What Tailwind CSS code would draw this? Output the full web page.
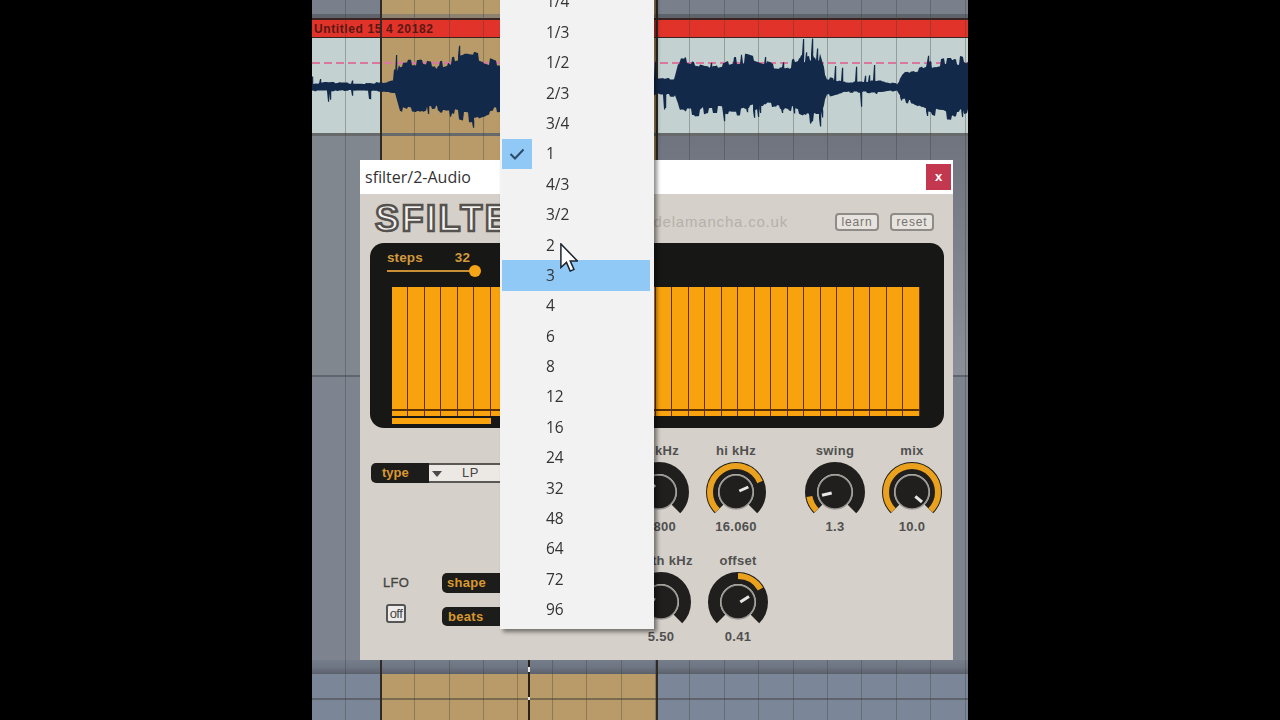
<!DOCTYPE html>
<html lang="en">
<head>
  <meta charset="UTF-8">
  <title>sfilter/2-Audio</title>
  <script src="https://cdn.jsdelivr.net/npm/@tailwindcss/browser@4"></script>
</head>
<body class="bg-black">
  <div class="relative w-[656px] h-[720px] mx-auto overflow-hidden blur-[0.6px] font-['Liberation_Sans',sans-serif]">

    <!-- Arrange view tracks -->
    <div class="flex h-[14px]">
      <div class="w-[68px] bg-[#79808c]"></div>
      <div class="w-[277px] bg-[#b79b6b]"></div>
      <div class="flex-1 bg-[#79808c]"></div>
    </div>
    <div class="flex h-[4px]">
      <div class="w-[68px] bg-[#5f646c]"></div>
      <div class="w-[277px] bg-[#8d8270]"></div>
      <div class="flex-1 bg-[#5f646c]"></div>
    </div>
    <div class="h-[20px] flex items-center pl-[2px] bg-[#e2332a] border-t-2 border-b border-[#3a2320] text-[12px] font-bold tracking-[0.6px] text-[#5b1712]">Untitled 15 4 20182</div>
    <div class="flex h-[95px]">
      <div class="w-[68px] bg-[#c3d2d1]"></div>
      <div class="w-[277px] bg-[#b99b69]"></div>
      <div class="flex-1 bg-[#c3d2d1]"></div>
    </div>
    <div class="h-[3px] bg-[#68696a]"></div>
    <div class="flex h-[239px]">
      <div class="w-[68px] bg-[#81878f]"></div>
      <div class="w-[277px] bg-[#b99b69]"></div>
      <div class="flex-1 bg-gradient-to-b from-[#6f747e] to-[#8a8f99]"></div>
    </div>
    <div class="flex h-[285px]">
      <div class="w-[68px] bg-[#7d8490] border-t-2 border-[#60656d]"></div>
      <div class="w-[277px] bg-[#b99b69]"></div>
      <div class="flex-1 bg-[#7d8490] border-t-2 border-[#60656d]"></div>
    </div>
    <div class="h-[14px] bg-gradient-to-b from-[#767d8a] via-[#6f7683] to-[#5a606b]"></div>
    <div class="flex h-[24px]">
      <div class="w-[68px] bg-[#7b8798]"></div>
      <div class="w-[277px] bg-[#b99b69]"></div>
      <div class="flex-1 bg-[#7b8798]"></div>
    </div>
    <div class="flex h-[2px]">
      <div class="w-[68px] bg-[#5f646c]"></div>
      <div class="w-[277px] bg-[#7a6c50]"></div>
      <div class="flex-1 bg-[#5f646c]"></div>
    </div>
    <div class="flex h-[20px]">
      <div class="w-[68px] bg-[#7b8798]"></div>
      <div class="w-[277px] bg-[#b99b69]"></div>
      <div class="flex-1 bg-[#7b8798]"></div>
    </div>

    <!-- grid lines and locators over the tracks -->
    <div class="absolute inset-0 bg-[repeating-linear-gradient(90deg,transparent_0,transparent_33.4px,rgba(60,60,50,0.35)_33.4px,rgba(60,60,50,0.35)_34.4px)]"></div>
    <div class="absolute left-[68px] top-0 w-[2px] h-full bg-[#2f2a24]"></div>
    <div class="absolute left-[344px] top-0 w-[2px] h-full bg-[#2f2a24]"></div>
    <div class="absolute left-[216px] top-[660px] w-[2px] h-[60px] bg-[#2a2018]"></div>
    <div class="absolute left-[216px] top-[667px] w-[2px] h-[5px] bg-[#e8e8e8]"></div>
    <div class="absolute left-[216px] top-[697px] w-[2px] h-[3px] bg-[#e8e8e8]"></div>

    <!-- waveform -->
    <svg class="absolute left-0 top-[38px]" width="656" height="95" viewBox="0 0 656 95">
      <line x1="0" y1="25" x2="656" y2="25" stroke="#d9789c" stroke-width="2" stroke-dasharray="8 4"/>
      <path id="wave" fill="#12294a"/>
    </svg>

    <!-- Plugin window -->
    <div class="absolute left-[48px] top-[160px] w-[593px] h-[500px] flex flex-col bg-[#d5d0c9]">
      <div class="h-[34px] bg-white flex items-center justify-between pl-[5px] pr-[2px] text-[16px] text-[#333] font-['Open_Sans',sans-serif]">
        <span>sfilter/2-Audio</span>
        <div class="w-[25px] h-[26px] bg-[#c4384f] flex items-center justify-center text-white text-[13px] font-bold font-['Liberation_Sans',sans-serif]">x</div>
      </div>

      <div class="h-[49px] flex items-center pl-[15px] pr-[19px]">
        <span class="text-[36px] leading-none font-bold tracking-[2.5px] text-[#f5f3f0] [-webkit-text-stroke:2.5px_#55524f]">SFILTER</span>
        <span class="ml-auto mr-[47px] mt-[7px] text-[15px] tracking-[0.8px] text-[#b5b1aa]">www.delamancha.co.uk</span>
        <div class="w-[44px] h-[18px] mt-[7px] mr-[11px] flex items-center justify-center border-2 border-[#8f8b86] rounded-[4px] bg-[#e7e4df] text-[12px] tracking-[0.9px] text-[#77736e]">learn</div>
        <div class="w-[44px] h-[18px] mt-[7px] flex items-center justify-center border-2 border-[#8f8b86] rounded-[4px] bg-[#e7e4df] text-[12px] tracking-[0.9px] text-[#77736e]">reset</div>
      </div>

      <!-- Step sequencer -->
      <div class="ml-[10px] mr-[9px] h-[185px] bg-[#171715] rounded-[14px] pl-[21.5px] pt-[6px]">
        <div class="flex w-[83px] -ml-[4.5px] justify-between text-[13.5px] font-bold text-[#d29a3c] leading-[18px] tracking-[0.1px]">
          <span>steps</span><span>32</span>
        </div>
        <div class="relative h-[2px] w-[88px] -ml-[4.5px] mt-[3px] bg-[#c98f35]">
          <div class="absolute -right-[6px] -top-[5px] w-[12px] h-[12px] rounded-full bg-[#f5a416]"></div>
        </div>
        <div class="w-[528px] mt-[15px]">
          <div class="flex flex-col gap-[2px] bg-[#5c3206]">
            <div class="h-[122px] bg-[repeating-linear-gradient(90deg,#f8a30e_0,#f8a30e_15.5px,#5c3206_15.5px,#5c3206_16.5px)]"></div>
            <div class="h-[5px] bg-[repeating-linear-gradient(90deg,#f8a30e_0,#f8a30e_15.5px,#5c3206_15.5px,#5c3206_16.5px)]"></div>
          </div>
          <div class="h-[6px] w-[99px] mt-[2px] bg-[#f8a30e]"></div>
        </div>
      </div>

      <!-- Controls -->
      <div class="flex-1 flex">
        <div class="w-[260.5px] pl-[11px] text-[13px] font-bold text-[#d9982f]">
          <div class="mt-[35px] h-[20px] flex">
            <div class="w-[58px] bg-[#1c1c1a] rounded-l-[5px] pl-[11px] flex items-center">type</div>
            <div class="w-[90px] relative bg-[#ece9e5] border-y-2 border-[#5a5855] text-[#444] flex items-center pl-[33px]">
              <svg class="absolute left-[3px] top-[6px]" width="10" height="6" viewBox="0 0 10 6"><path d="M0 0H10L5 6Z" fill="#4a4a4a"/></svg>
              <span class="font-normal tracking-[0.5px]">LP</span>
            </div>
          </div>
          <div class="mt-[90px] flex gap-[21px]">
            <div class="w-[50px] flex flex-col gap-[11px] items-center">
              <div class="h-[19.5px] flex items-center text-[#444] font-normal tracking-[0.3px] [-webkit-text-stroke:0.3px_#444]">LFO</div>
              <div class="w-[20px] h-[19.5px] border-2 border-[#555] rounded-[3px] bg-[#eeecea] flex items-center justify-center text-[#444] text-[13px] font-normal tracking-[-0.5px]">off</div>
            </div>
            <div class="flex flex-col gap-[14px]">
              <div class="w-[90px] h-[19.5px] bg-[#1c1c1a] rounded-l-[5px] pl-[5px] flex items-center tracking-[0.3px]">shape</div>
              <div class="w-[90px] h-[19.5px] bg-[#1c1c1a] rounded-l-[5px] pl-[6px] flex items-center tracking-[0.3px]">beats</div>
            </div>
          </div>
        </div>

        <div class="pt-[15px] flex flex-col gap-[18px] text-[13px] font-bold text-[#505050] tracking-[0.3px]">
          <div class="flex">
            <div class="w-[77px] flex flex-col items-center">
              <span class="h-[16px] leading-[16px]">lo kHz</span>
              <svg class="mt-px" width="64" height="64" viewBox="0 0 64 64" fill="none">
                <path d="M15.03 48.97A24 24 0 1 1 48.97 48.97" stroke="#211f1e" stroke-width="12"/>
                <circle cx="32" cy="32" r="17" fill="#211f1e" stroke="#9a9792" stroke-width="1.5"/>
                <line x1="28" y1="27" x2="24" y2="23" stroke="#e6e6e6" stroke-width="3"/>
              </svg>
              <span class="h-[16px] leading-[16px] -mt-[5px]">0.800</span>
            </div>
            <div class="w-[77px] flex flex-col items-center">
              <span class="h-[16px] leading-[16px]">hi kHz</span>
              <svg class="mt-px" width="64" height="64" viewBox="0 0 64 64" fill="none">
                <path d="M15.03 48.97A24 24 0 1 1 48.97 48.97" stroke="#211f1e" stroke-width="12"/>
                <path d="M13.6 50.4A26 26 0 1 1 56 22" stroke="#e9a11e" stroke-width="6"/>
                <circle cx="32" cy="32" r="17" fill="#211f1e" stroke="#9a9792" stroke-width="1.5"/>
                <line x1="35.3" y1="31" x2="44.3" y2="27" stroke="#e6e6e6" stroke-width="3"/>
              </svg>
              <span class="h-[16px] leading-[16px] -mt-[5px]">16.060</span>
            </div>
            <div class="w-[22px]"></div>
            <div class="w-[77px] flex flex-col items-center">
              <span class="h-[16px] leading-[16px]">swing</span>
              <svg class="mt-px" width="64" height="64" viewBox="0 0 64 64" fill="none">
                <path d="M15.03 48.97A24 24 0 1 1 48.97 48.97" stroke="#211f1e" stroke-width="12"/>
                <path d="M13.6 50.4A26 26 0 0 1 6.4 36.5" stroke="#e9a11e" stroke-width="6"/>
                <circle cx="32" cy="32" r="17" fill="#211f1e" stroke="#9a9792" stroke-width="1.5"/>
                <line x1="19" y1="35.3" x2="28.7" y2="33" stroke="#e6e6e6" stroke-width="3"/>
              </svg>
              <span class="h-[16px] leading-[16px] -mt-[5px]">1.3</span>
            </div>
            <div class="w-[77px] flex flex-col items-center">
              <span class="h-[16px] leading-[16px]">mix</span>
              <svg class="mt-px" width="64" height="64" viewBox="0 0 64 64" fill="none">
                <path d="M15.03 48.97A24 24 0 1 1 48.97 48.97" stroke="#211f1e" stroke-width="12"/>
                <path d="M13.6 50.4A26 26 0 1 1 50.4 50.4" stroke="#e9a11e" stroke-width="6"/>
                <circle cx="32" cy="32" r="17" fill="#211f1e" stroke="#9a9792" stroke-width="1.5"/>
                <line x1="35.3" y1="36.3" x2="42" y2="42" stroke="#e6e6e6" stroke-width="3"/>
              </svg>
              <span class="h-[16px] leading-[16px] -mt-[5px]">10.0</span>
            </div>
          </div>
          <div class="flex ml-[2px]">
            <div class="w-[77px] flex flex-col items-center">
              <span class="h-[16px] leading-[16px] whitespace-nowrap">width kHz</span>
              <svg class="mt-px" width="64" height="64" viewBox="0 0 64 64" fill="none">
                <path d="M15.03 48.97A24 24 0 1 1 48.97 48.97" stroke="#211f1e" stroke-width="12"/>
                <circle cx="32" cy="32" r="17" fill="#211f1e" stroke="#9a9792" stroke-width="1.5"/>
                <line x1="26" y1="30" x2="22" y2="28" stroke="#e6e6e6" stroke-width="3"/>
              </svg>
              <span class="h-[16px] leading-[16px] -mt-[5px]">5.50</span>
            </div>
            <div class="w-[77px] flex flex-col items-center">
              <span class="h-[16px] leading-[16px]">offset</span>
              <svg class="mt-px" width="64" height="64" viewBox="0 0 64 64" fill="none">
                <path d="M15.03 48.97A24 24 0 1 1 48.97 48.97" stroke="#211f1e" stroke-width="12"/>
                <path d="M32 6A26 26 0 0 1 54.5 19" stroke="#e9a11e" stroke-width="6"/>
                <circle cx="32" cy="32" r="17" fill="#211f1e" stroke="#9a9792" stroke-width="1.5"/>
                <line x1="34.3" y1="32" x2="43" y2="26.4" stroke="#e6e6e6" stroke-width="3"/>
              </svg>
              <span class="h-[16px] leading-[16px] -mt-[5px]">0.41</span>
            </div>
          </div>
        </div>
      </div>
    </div>

    <!-- Beats menu -->
    <div class="absolute left-[188px] -top-[13.2px] w-[154px] bg-[#f2f2f2] pb-[4px] shadow-[3px_3px_4px_rgba(0,0,0,0.45)] text-[15.5px] text-[#333] font-['Open_Sans',sans-serif]">
      <div class="w-[148px] ml-[2px] h-[30.4px] pl-[44px] flex items-center">1/4</div>
      <div class="w-[148px] ml-[2px] h-[30.4px] pl-[44px] flex items-center">1/3</div>
      <div class="w-[148px] ml-[2px] h-[30.4px] pl-[44px] flex items-center">1/2</div>
      <div class="w-[148px] ml-[2px] h-[30.4px] pl-[44px] flex items-center">2/3</div>
      <div class="w-[148px] ml-[2px] h-[30.4px] pl-[44px] flex items-center">3/4</div>
      <div class="relative w-[148px] ml-[2px] h-[30.4px] pl-[44px] flex items-center">
        <div class="absolute left-0 top-0 w-[30px] h-full bg-[#90c8f6] flex items-center justify-center">
          <svg width="16" height="12" viewBox="0 0 16 12" fill="none"><path d="M1.5 6L6 10.5L14.5 1.5" stroke="#2b4a68" stroke-width="2"/></svg>
        </div>
        1
      </div>
      <div class="w-[148px] ml-[2px] h-[30.4px] pl-[44px] flex items-center">4/3</div>
      <div class="w-[148px] ml-[2px] h-[30.4px] pl-[44px] flex items-center">3/2</div>
      <div class="w-[148px] ml-[2px] h-[30.4px] pl-[44px] flex items-center">2</div>
      <div class="w-[148px] ml-[2px] h-[30.4px] pl-[44px] flex items-center bg-[#90c8f6]">3</div>
      <div class="w-[148px] ml-[2px] h-[30.4px] pl-[44px] flex items-center">4</div>
      <div class="w-[148px] ml-[2px] h-[30.4px] pl-[44px] flex items-center">6</div>
      <div class="w-[148px] ml-[2px] h-[30.4px] pl-[44px] flex items-center">8</div>
      <div class="w-[148px] ml-[2px] h-[30.4px] pl-[44px] flex items-center">12</div>
      <div class="w-[148px] ml-[2px] h-[30.4px] pl-[44px] flex items-center">16</div>
      <div class="w-[148px] ml-[2px] h-[30.4px] pl-[44px] flex items-center">24</div>
      <div class="w-[148px] ml-[2px] h-[30.4px] pl-[44px] flex items-center">32</div>
      <div class="w-[148px] ml-[2px] h-[30.4px] pl-[44px] flex items-center">48</div>
      <div class="w-[148px] ml-[2px] h-[30.4px] pl-[44px] flex items-center">64</div>
      <div class="w-[148px] ml-[2px] h-[30.4px] pl-[44px] flex items-center">72</div>
      <div class="w-[148px] ml-[2px] h-[30.4px] pl-[44px] flex items-center">96</div>
    </div>

    <!-- mouse pointer -->
    <svg class="absolute left-[248px] top-[243px]" width="18" height="29" viewBox="0 0 12 19.3">
      <path d="M.6 .6V16.4L4.3 12.9L6.8 18.7L9.3 17.6L6.8 11.9H11.6Z" fill="#fff" stroke="#1d2530" stroke-width="1"/>
    </svg>
  </div>

  <script>
    // envelope: [x, up, down], x in px from the left of the column
    var env = [[0,5,5],[33,5,5],[68,6,6],[83,8,6],[88,28,24],[108,36,38],[138,36,34],[168,36,36],[188,36,36],
      [338,11,10],[363,11,10],[369,34,30],[388,36,38],[418,34,31],[448,32,24],[468,32,31],[508,36,38],[515,12,12],
      [538,8,8],[568,7,7],[585,4,4],[593,22,20],[613,32,33],[656,32,33]];
    var seed = 11;
    function rnd() { seed = (seed * 16807) % 2147483647; return seed / 2147483647; }
    function at(x, i) {
      for (var k = 1; k < env.length; k++) {
        if (x <= env[k][0]) {
          var t = (x - env[k-1][0]) / (env[k][0] - env[k-1][0]);
          return env[k-1][i] + (env[k][i] - env[k-1][i]) * t;
        }
      }
      return env[env.length-1][i];
    }
    var up = [], down = [], holdU = 1, holdD = 1, left = 0;
    for (var x = 0; x <= 656; x += 1) {
      if (left-- <= 0) {
        holdU = 0.68 + rnd() * 0.32;
        holdD = 0.68 + rnd() * 0.32;
        left = 1 + Math.floor(rnd() * 4);
      }
      var thin = at(x, 1) < 13;
      var lobe = 0.88 + 0.14 * Math.sin(x / 11);
      var u = at(x, 1) * holdU * lobe, d = at(x, 2) * holdD * lobe;
      // narrow transient spikes, two pixels wide
      if (rnd() < 0.05) { var s = thin ? 2 + rnd() * 1.8 : 1.2 + rnd() * 0.3; up.push((x - 1) + ' ' + (49 - u).toFixed(1)); up.push(x + ' ' + (49 - u * s).toFixed(1)); up.push((x + 1.2) + ' ' + (49 - u * s).toFixed(1)); up.push((x + 1.3) + ' ' + (49 - u).toFixed(1)); }
      else up.push(x + ' ' + (49 - u).toFixed(1));
      if (rnd() < 0.05) { var s2 = thin ? 2 + rnd() * 1.6 : 1.15 + rnd() * 0.25; down.unshift((x - 1) + ' ' + (49 + d).toFixed(1)); down.unshift(x + ' ' + (49 + d * s2).toFixed(1)); down.unshift((x + 1.2) + ' ' + (49 + d * s2).toFixed(1)); down.unshift((x + 1.3) + ' ' + (49 + d).toFixed(1)); }
      else down.unshift(x + ' ' + (49 + d).toFixed(1));
    }
    document.getElementById('wave').setAttribute('d', 'M' + up.join('L') + 'L' + down.join('L') + 'Z');
  </script>
</body>
</html>
